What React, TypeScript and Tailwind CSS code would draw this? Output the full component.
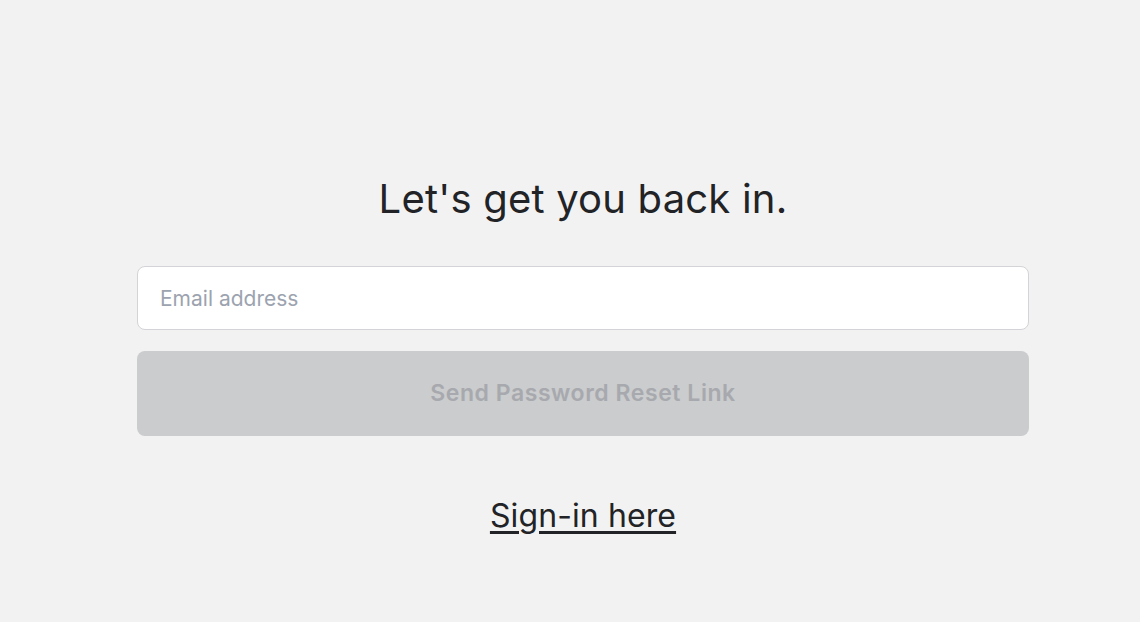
import React from "react";

export default function App() {
  return (
    <div
      className="min-h-[622px] w-full bg-[#f2f2f2] pl-[137px] pr-[111px] pt-[172px]"
      style={{ fontFamily: "Inter, 'Noto Sans', sans-serif" }}
    >
      <div className="flex w-full flex-col items-center">
        <h1 className="text-[40px] leading-[54px] font-normal text-[#222326] tracking-[0.2px]">
          Let's get you back in.
        </h1>
        <input
          type="email"
          placeholder="Email address"
          className="mt-[40px] h-[64px] w-full rounded-[8px] border border-[#d4d4d8] bg-white px-[22px] text-[21px] text-[#222] placeholder:text-[#9ca3af] outline-none"
        />
        <button
          disabled
          className="mt-[21px] h-[85px] w-full rounded-[8px] bg-[#cbcccd] text-[23px] font-semibold text-[#a7a9ae] tracking-[0.55px]"
        >
          Send Password Reset Link
        </button>
        <a
          href="#"
          className="mt-[58px] text-[32px] leading-[44px] text-[#222326] underline underline-offset-[4px] decoration-[2.5px] tracking-[0.1px]"
        >
          Sign-in here
        </a>
      </div>
    </div>
  );
}
